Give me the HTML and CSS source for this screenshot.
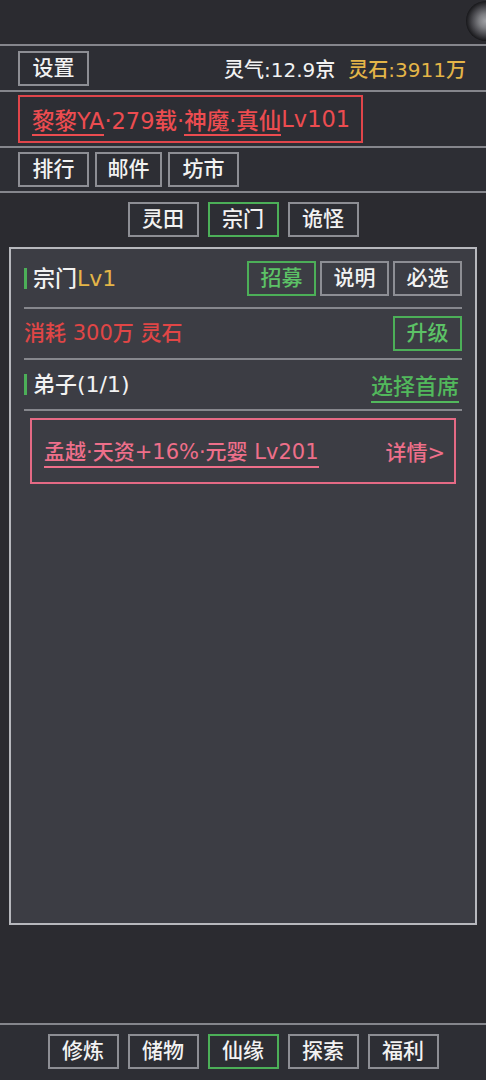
FILE: index.html
```html
<!DOCTYPE html>
<html lang="zh-CN">
<head>
    <meta charset="UTF-8">
    <meta name="viewport" content="width=device-width, initial-scale=1.0">
    <title>宗门</title>
    <link rel="stylesheet" href="styles.css">
</head>
<body>
    <div class="top">
        <div class="ball"></div>
    </div>

    <div class="bar info-bar">
        <button class="btn">设置</button>
        <div class="res">
            <span>灵气:12.9京</span>
            <span class="gold">灵石:3911万</span>
        </div>
    </div>

    <div class="bar name-bar">
        <div class="name-box"><span class="u">黎黎YA</span>·279载·<span class="u">神魔·真仙</span>Lv101</div>
    </div>

    <div class="bar menu-bar">
        <button class="btn">排行</button>
        <button class="btn narrow">邮件</button>
        <button class="btn">坊市</button>
    </div>

    <div class="tabs">
        <button class="btn">灵田</button>
        <button class="btn on">宗门</button>
        <button class="btn">诡怪</button>
    </div>

    <div class="panel">
        <div class="row">
            <div class="title">宗门<span class="gold">Lv1</span></div>
            <div class="ops">
                <button class="btn small on green">招募</button>
                <button class="btn small">说明</button>
                <button class="btn small">必选</button>
            </div>
        </div>
        <div class="row">
            <div class="cost">消耗 300万 灵石</div>
            <button class="btn small on green">升级</button>
        </div>
        <div class="row">
            <div class="title">弟子(1/1)</div>
            <div class="link">选择首席</div>
        </div>
        <div class="disciple">
            <span class="who">孟越·天资+16%·元婴 Lv201</span>
            <span class="more">详情&gt;</span>
        </div>
    </div>

    <div class="fill"></div>

    <div class="nav">
        <button class="btn">修炼</button>
        <button class="btn">储物</button>
        <button class="btn on">仙缘</button>
        <button class="btn">探索</button>
        <button class="btn">福利</button>
    </div>
</body>
</html>
```

FILE: styles.css
```css
body {
    margin: 0;
    width: 486px;
    height: 1080px;
    display: flex;
    flex-direction: column;
    background-color: #2b2b30;
    color: #f2f2f2;
    font-family: "DejaVu Sans", "Noto Sans CJK SC", sans-serif;
    font-weight: 500;
    font-size: 20px;
    overflow: hidden;
}

.top {
    height: 44px;
    position: relative;
}

/* floating ball, cut by the right edge */
.ball {
    position: absolute;
    left: 466px;
    top: 1px;
    width: 40px;
    height: 40px;
    border-radius: 50%;
    background: radial-gradient(circle at 50% 50%, #a2a3a7 0, #7d7e82 25%, #4a4a4f 48%, #19191c 70%, #232326 100%);
}

.bar {
    border-top: 2px solid #85868c;
    background-color: #2d2e34;
    display: flex;
    align-items: center;
    padding: 0 18px;
}

.btn {
    font-family: inherit;
    font-weight: 500;
    font-size: 21px;
    color: #f2f2f2;
    background-color: #2d2e34;
    border: 2px solid #8d8e94;
    width: 71px;
    height: 35px;
    padding: 0;
    line-height: 1;
    cursor: pointer;
}

.btn.on {
    border-color: #4caf58;
}

.btn.narrow {
    width: 67px;
}

.info-bar {
    height: 44px;
    justify-content: space-between;
}

.res {
    display: flex;
    gap: 13px;
    padding-right: 2px;
}

.gold {
    color: #e4b548;
}

.name-bar {
    height: 54px;
}

.name-box {
    height: 44px;
    border: 2px solid #e0454a;
    color: #ec4c50;
    font-size: 22.5px;
    padding: 0 11px 0 12px;
    display: flex;
    align-items: center;
    white-space: nowrap;
}

.u {
    border-bottom: 2px solid #ec4c50;
    line-height: 26px;
    padding-top: 6px;
}

.menu-bar {
    height: 43px;
    gap: 6px;
}

.tabs {
    border-top: 2px solid #85868c;
    display: flex;
    justify-content: center;
    gap: 9px;
    padding: 9px 0 10px 0;
}

.panel {
    margin: 0 9px;
    height: 674px;
    border: 2px solid #b7b8bd;
    background-color: #3c3d44;
    padding: 0 13px;
}

.row {
    display: flex;
    justify-content: space-between;
    align-items: center;
    height: 49px;
    border-bottom: 2px solid #86878d;
    font-size: 22px;
}

.row:first-child {
    height: 58px;
}

.title {
    border-left: 3px solid #4caf58;
    padding-left: 6px;
    line-height: 21px;
}

.ops {
    display: flex;
    gap: 4px;
}

.btn.small {
    width: 69px;
    background-color: #3c3d44;
}

.btn.green {
    color: #5cc266;
}

.cost {
    color: #e04646;
    font-size: 21px;
    margin-top: -6px;
}

.link {
    color: #52b85c;
    border-bottom: 2px solid #52b85c;
    line-height: 28px;
    margin: 6px 3px 0 0;
}

.disciple {
    margin: 7px 6px 0 6px;
    height: 62px;
    border: 2px solid #e56a85;
    color: #ee6f8a;
    font-size: 21px;
    display: flex;
    justify-content: space-between;
    align-items: center;
    padding: 0 12px;
}

.more {
    margin-right: -3px;
}

.who {
    border-bottom: 2px solid #ee6f8a;
    line-height: 28px;
    padding-top: 4px;
}

.fill {
    flex: 1;
}

.nav {
    border-top: 2px solid #85868c;
    background-color: #2d2e34;
    height: 46px;
    display: flex;
    justify-content: center;
    gap: 9px;
    padding-top: 9px;
}
```
